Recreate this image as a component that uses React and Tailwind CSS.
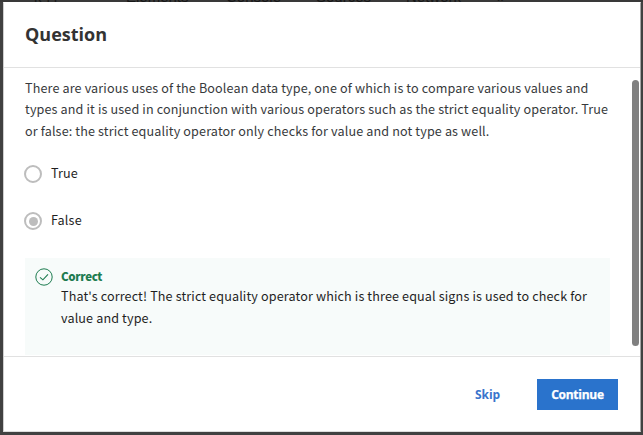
const bodyFont = "font-['Noto_Sans_CJK_SC','Noto_Sans',sans-serif]";
const uiFont = "font-['Open_Sans','Noto_Sans',sans-serif]";

function Line({ children }) {
  return <span className="block whitespace-nowrap">{children}</span>;
}

function Radio({ label, checked }) {
  return (
    <div className="flex h-[19px] items-center">
      <span className="-ml-px mr-[9px] flex h-[18px] w-[18px] items-center justify-center rounded-full border-2 border-[#bdbdbd]">
        {checked && <span className="h-[9px] w-[9px] rounded-full bg-[#bdbdbd]" />}
      </span>
      <span className="-mt-[4px] leading-[19px] tracking-[0.15px]">{label}</span>
    </div>
  );
}

export default function App() {
  return (
    <div className={`flex h-[435px] w-[643px] flex-col overflow-hidden bg-[#414141] ${bodyFont} text-[12.6px] text-[#1f1f1f]`}>
      <div className="flex h-[2px] shrink-0 items-end overflow-hidden bg-[#393939] font-['Liberation_Sans',sans-serif] text-[15px] leading-[11px] text-[#171717]">
        <span className="ml-[34px] w-[92px]">k ⊓</span>
        <span className="w-[100px]">Elements</span>
        <span className="w-[90px]">Console</span>
        <span className="w-[90px]">Sources</span>
        <span className="w-[91px]">Network</span>
        <span>»</span>
      </div>
      <div className="ml-[3px] flex h-[430px] w-[638px] flex-col border-y border-l border-r border-t-white border-b-[#dddddd] border-l-[#cfcfcf] border-r-[#a5a5a5] bg-white">
        <header className="flex h-[65px] shrink-0 items-center border-b border-[#e1e1e1] pb-[2px] pl-[21px]">
          <h1 className={`${uiFont} text-[18px] font-bold leading-6 text-[#333333]`}>Question</h1>
        </header>
        <main className="flex h-[288px] shrink-0 overflow-hidden">
          <div className="ml-[21px] w-[585px] pt-[9px]">
            <p className="h-[64px] leading-[21.4px] tracking-[0.13px] text-[#373a3c]">
              <Line>There are various uses of the Boolean data type, one of which is to compare various values and</Line>
              <Line>types and it is used in conjunction with various operators such as the strict equality operator. True</Line>
              <Line>or false: the strict equality operator only checks for value and not type as well.</Line>
            </p>
            <div className="mt-[23.5px] flex flex-col gap-[28px]">
              <Radio label="True" />
              <Radio label="False" checked />
            </div>
            <section className="mt-[27px] flex h-[97px] bg-[#f7fbfa] pl-[10px] pt-[9px]">
              <svg viewBox="0 0 18 18" className="mr-2 mt-px h-[18px] w-[18px]" fill="none" stroke="#1d7c50">
                <circle cx="9" cy="9" r="8.2" strokeWidth="1" />
                <path d="M5 9.3 7.9 11.8 13 6.3" strokeWidth="1.1" />
              </svg>
              <div className="-mt-px">
                <h2 className="text-[11.5px] font-black leading-[20px] tracking-[-0.35px] text-[#1d7c50]">Correct</h2>
                <p className="-mt-px leading-[22px] tracking-[0.13px]">
                  <Line>That's correct! The strict equality operator which is three equal signs is used to check for</Line>
                  <Line>value and type.</Line>
                </p>
              </div>
            </section>
          </div>
          <div className="ml-[22px] mt-[12px] h-[266px] w-[7px] rounded-full bg-[#808080]" />
        </main>
        <footer className={`flex grow items-center justify-end border-t border-[#e1e1e1] pr-[22px] ${uiFont} text-[12px] font-bold`}>
          <button className="mr-[37px] pt-[2px] tracking-[-0.1px] text-[#3974cc]">Skip</button>
          <button className="h-[31px] w-[81px] bg-[#2a73cc] pt-[2px] tracking-[-0.25px] text-white [-webkit-text-stroke:0.25px_white]">Continue</button>
        </footer>
      </div>
    </div>
  );
}
